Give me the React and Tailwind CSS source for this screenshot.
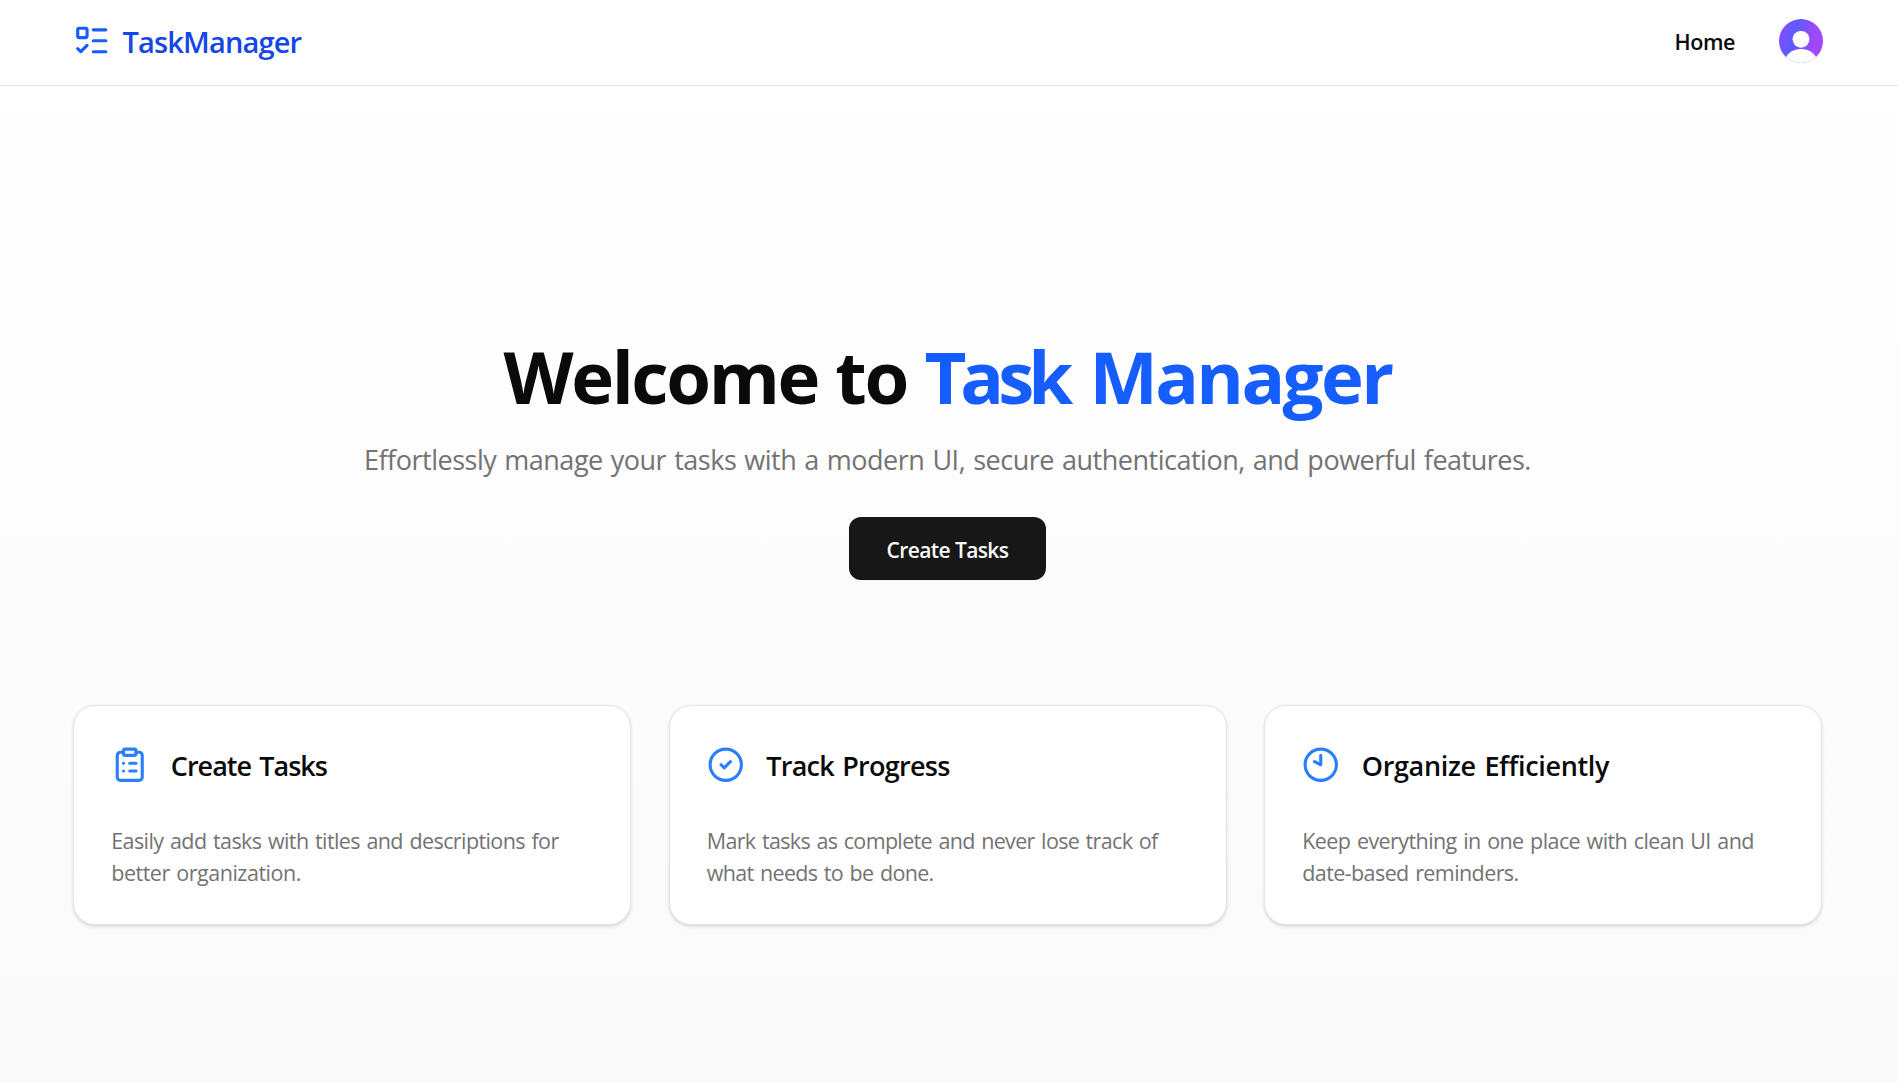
import React from "react";
import { ListTodo, ClipboardList, CircleCheck, Clock10 } from "lucide-react";

const features = [
  {
    Icon: ClipboardList,
    title: "Create Tasks",
    titleTracking: "tracking-[-0.97px]",
    lines: [
      { text: "Easily add tasks with titles and descriptions for", tracking: "tracking-[-0.59px]" },
      { text: "better organization.", tracking: "tracking-[-0.49px]" },
    ],
  },
  {
    Icon: CircleCheck,
    title: "Track Progress",
    titleTracking: "tracking-[-0.74px]",
    lines: [
      { text: "Mark tasks as complete and never lose track of", tracking: "tracking-[-0.66px]" },
      { text: "what needs to be done.", tracking: "tracking-[-0.66px]" },
    ],
  },
  {
    Icon: Clock10,
    title: "Organize Efficiently",
    titleTracking: "tracking-[-0.34px]",
    lines: [
      { text: "Keep everything in one place with clean UI and", tracking: "tracking-[-0.58px]" },
      { text: "date-based reminders.", tracking: "tracking-[-0.59px]" },
    ],
  },
];

function Avatar() {
  return (
    <svg viewBox="0 0 44 44" className="size-11" role="img" aria-label="Account">
      <defs>
        <linearGradient id="avatar-fill" x1="0" y1="0.35" x2="1" y2="0.65">
          <stop offset="0" stopColor="#8b4aff" />
          <stop offset="0.3" stopColor="#5a5cff" />
          <stop offset="0.72" stopColor="#9a49ff" />
          <stop offset="1" stopColor="#a946ff" />
        </linearGradient>
        <clipPath id="avatar-clip">
          <circle cx="22" cy="22" r="22" />
        </clipPath>
      </defs>
      <g clipPath="url(#avatar-clip)">
        <rect width="44" height="44" fill="url(#avatar-fill)" />
        <circle cx="22" cy="20.3" r="8.4" fill="#fff" />
        <ellipse cx="22" cy="43.5" rx="16.5" ry="13.4" fill="#fff" />
        <path d="M8 39a22 22 0 0 0 28 0" fill="none" stroke="#e8e8ec" strokeWidth="0.6" />
      </g>
    </svg>
  );
}

function Header() {
  return (
    <header className="flex h-[86px] items-center justify-between border-b border-[#e5e5e5] bg-white pr-[75px] pl-[73px]">
      <a className="flex items-center gap-3">
        <ListTodo className="-mt-[3px] size-[37.5px] text-[#155dfc]" strokeWidth={2} />
        <span className="-mt-[2px] text-[29px] leading-[38px] font-[550] tracking-[-0.85px] text-[#1447e6]">TaskManager</span>
      </a>
      <nav className="flex items-center gap-[44px]">
        <a className="-mt-[1px] text-[21.5px] leading-8 font-[550] tracking-[-0.4px]">Home</a>
        <div className="-mt-[3px]">
          <Avatar />
        </div>
      </nav>
    </header>
  );
}

function FeatureCard({ Icon, title, titleTracking, lines }) {
  return (
    <article className="h-[220px] rounded-[22px] border border-[#e5e5e5] bg-white px-[37.25px] pt-10 shadow-[0_1.25px_3.75px_rgba(0,0,0,0.1),0_1.25px_2.5px_-1.25px_rgba(0,0,0,0.1)]">
      <div className="flex items-center gap-[22px]">
        <Icon className="size-[37.5px] shrink-0 text-[#2b7fff]" strokeWidth={2} />
        <h2 className={`pt-[2px] text-[27px] leading-9 font-[550] whitespace-nowrap [word-spacing:2px] ${titleTracking}`}>{title}</h2>
      </div>
      <p className="mt-[41px] text-[21.5px] leading-8 whitespace-nowrap text-[#737373] [word-spacing:1.5px]">
        {lines.map((line) => (
          <span key={line.text} className={`block ${line.tracking}`}>
            {line.text}
          </span>
        ))}
      </p>
    </article>
  );
}

export default function App() {
  return (
    <div className="flex h-[1083px] flex-col overflow-hidden bg-gradient-to-b from-white to-[#fafafa] font-['Open_Sans','Noto_Sans',sans-serif] text-[#0a0a0a] [font-variant-ligatures:none]">
      <Header />
      <main className="flex flex-1 flex-col items-center pt-[245px] pr-[3px]">
        <h1 className="text-[72.5px] leading-[90px] font-bold whitespace-pre">
          <span className="tracking-[-2.4px] [word-spacing:1px]">Welcome to </span>
          <span className="text-[#155dfc]">
            <span className="tracking-[-6px]">Task</span>
            <span className="tracking-[-2.6px] [word-spacing:6px]"> Manager</span>
          </span>
        </h1>
        <p className="mt-[19px] text-[27px] leading-[40px] tracking-[-0.49px] whitespace-nowrap text-[#737373] [word-spacing:1.5px]">
          Effortlessly manage your tasks with a modern UI, secure authentication, and powerful features.
        </p>
        <button className="mt-[37px] flex h-[63px] w-[197px] items-center justify-center rounded-[12px] bg-[#171717] pt-[5px] text-[21px] font-[550] tracking-[-0.6px] text-[#fafafa] shadow-[0_1px_2px_rgba(0,0,0,0.05)]">
          Create Tasks
        </button>
        <section className="mt-[125px] grid w-[1749px] grid-cols-3 gap-[37.5px]">
          {features.map((feature) => (
            <FeatureCard key={feature.title} {...feature} />
          ))}
        </section>
      </main>
    </div>
  );
}
